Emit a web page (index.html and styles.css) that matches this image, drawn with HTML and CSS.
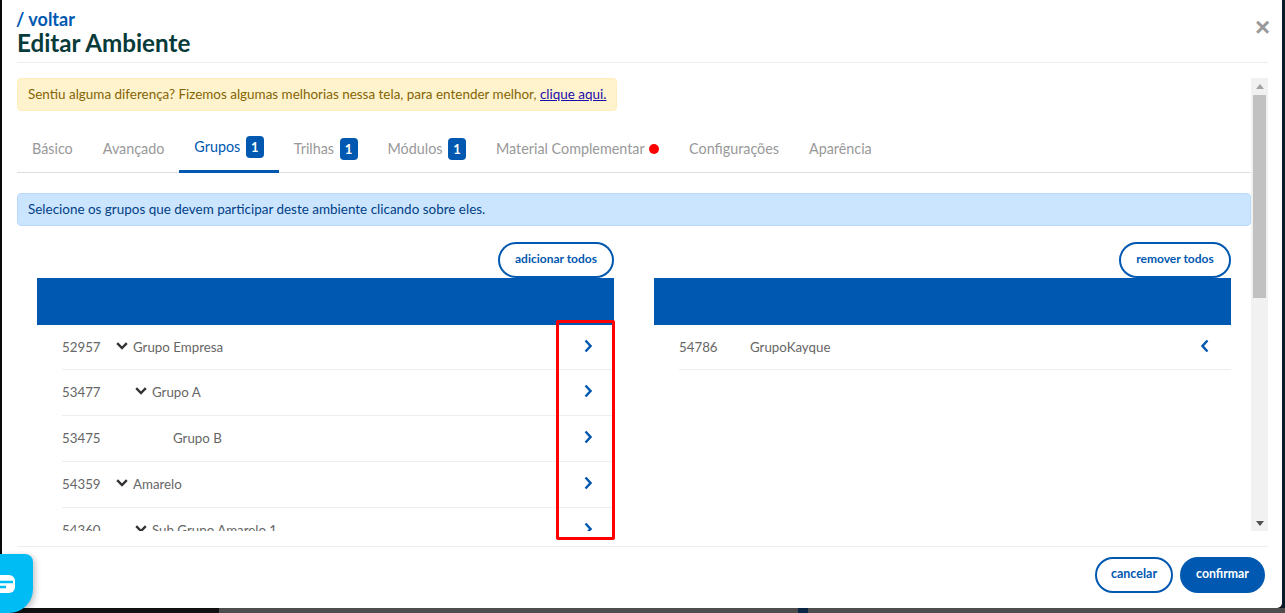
FILE: index.html
```html
<!DOCTYPE html>
<html lang="pt-BR">
<head>
<meta charset="utf-8">
<title>Editar Ambiente</title>
<link rel="stylesheet" href="styles.css">
</head>
<body>
<div class="stage">
  <main class="modal">
    <header class="modal-head">
      <div class="head-text">
        <a class="back">/ voltar</a>
        <h1 class="title">Editar Ambiente</h1>
      </div>
      <span class="close">×</span>
    </header>
    <div class="modal-body">
      <div class="scroll-content">
        <div class="alert alert-warn">Sentiu alguma diferença? Fizemos algumas melhorias nessa tela, para entender melhor, <a class="alert-link">clique aqui.</a></div>
        <nav class="tabs">
          <span class="tab">Básico</span>
          <span class="tab">Avançado</span>
          <span class="tab active">Grupos <b class="badge">1</b></span>
          <span class="tab">Trilhas <b class="badge">1</b></span>
          <span class="tab">Módulos <b class="badge">1</b></span>
          <span class="tab">Material Complementar <i class="dot"></i></span>
          <span class="tab">Configurações</span>
          <span class="tab">Aparência</span>
        </nav>
        <div class="alert alert-info">Selecione os grupos que devem participar deste ambiente clicando sobre eles.</div>
        <div class="columns">
          <section class="col">
            <div class="col-actions"><button class="btn btn-outline btn-small">adicionar todos</button></div>
            <div class="col-head"></div>
            <ul class="list">
              <li class="row"><span class="num">52957</span><span class="name lvl0"><svg class="caret" viewBox="0 0 12 8"><path d="M1.2 1.2 6 6l4.8-4.8"/></svg>Grupo Empresa</span><svg class="arrow" viewBox="0 0 8 14"><path d="M1.5 1.5 6.5 7l-5 5.5"/></svg></li>
              <li class="row"><span class="num">53477</span><span class="name lvl1"><svg class="caret" viewBox="0 0 12 8"><path d="M1.2 1.2 6 6l4.8-4.8"/></svg>Grupo A</span><svg class="arrow" viewBox="0 0 8 14"><path d="M1.5 1.5 6.5 7l-5 5.5"/></svg></li>
              <li class="row"><span class="num">53475</span><span class="name lvl2">Grupo B</span><svg class="arrow" viewBox="0 0 8 14"><path d="M1.5 1.5 6.5 7l-5 5.5"/></svg></li>
              <li class="row"><span class="num">54359</span><span class="name lvl0"><svg class="caret" viewBox="0 0 12 8"><path d="M1.2 1.2 6 6l4.8-4.8"/></svg>Amarelo</span><svg class="arrow" viewBox="0 0 8 14"><path d="M1.5 1.5 6.5 7l-5 5.5"/></svg></li>
              <li class="row"><span class="num">54360</span><span class="name lvl1"><svg class="caret" viewBox="0 0 12 8"><path d="M1.2 1.2 6 6l4.8-4.8"/></svg>Sub Grupo Amarelo 1</span><svg class="arrow" viewBox="0 0 8 14"><path d="M1.5 1.5 6.5 7l-5 5.5"/></svg></li>
            </ul>
          </section>
          <section class="col">
            <div class="col-actions"><button class="btn btn-outline btn-small btn-remove">remover todos</button></div>
            <div class="col-head"></div>
            <ul class="list">
              <li class="row"><span class="num">54786</span><span class="name lvl-plain">GrupoKayque</span><svg class="arrow" viewBox="0 0 8 14"><path d="M6.5 1.5 1.5 7l5 5.5"/></svg></li>
            </ul>
          </section>
        </div>
      </div>
      <div class="scrollbar">
        <span class="sb-up"></span>
        <span class="sb-thumb"></span>
        <span class="sb-down"></span>
      </div>
    </div>
    <footer class="modal-foot">
      <button class="btn btn-outline btn-cancel">cancelar</button>
      <button class="btn btn-solid">confirmar</button>
    </footer>
    <div class="highlight"></div>
  </main>
  <div class="edge"></div>
</div>
<div class="strip">
  <span class="strip-a"></span><span class="strip-b"></span><span class="strip-c"></span><span class="strip-d"></span>
</div>
<div class="chat"><svg class="chat-icon" viewBox="0 0 30 18"><rect width="30" height="18" rx="6" fill="#fff"/><path d="M0 7h28M0 12h21" stroke="#00bcf5" stroke-width="2.4"/></svg></div>
</body>
</html>
```
FILE: styles.css
```css
* { box-sizing: border-box; }
html, body { margin: 0; height: 613px; overflow: hidden; }
body {
  width: 1285px;
  background: #0b1a2b;
  font-family: "Lato", "Noto Sans", sans-serif;
  font-size: 14px;
  color: #666;
  display: flex;
  flex-direction: column;
}
.stage { display: flex; height: 608px; background: #0a0a0a; padding-left: 2px; }
.modal {
  width: 1280px;
  height: 608px;
  background: #fff;
  border-radius: 0 0 5px 5px;
  padding: 0 14px 0 15px;
  display: flex;
  flex-direction: column;
  position: relative;
}
.edge { width: 3px; background: #0b1a2b; }
.strip { display: flex; height: 5px; }
.strip-a { width: 219px; background: #111; }
.strip-b { width: 579px; background: #4d4d4d; }
.strip-c { width: 10px; background: #0b2545; }
.strip-d { flex: 1; background: #4d4d4d; }

.modal-head {
  height: 63px;
  border-bottom: 1px solid #eee;
  display: flex;
  justify-content: space-between;
  flex: none;
}
.head-text { padding-top: 10px; }
.back { display: block; color: #0058b0; font-size: 18px; font-weight: 700; line-height: 19px; margin-left: -1px; }
.title { margin: 0; font-size: 24.2px; font-weight: 700; line-height: 28px; color: #073b3a; }
.close { color: #999; font: 700 26px/26px "Liberation Sans", sans-serif; padding-top: 14px; width: 14px; text-align: center; margin-right: -1px; }

.modal-body { height: 453px; margin-top: 15px; display: flex; flex: none; }
.scroll-content { width: 1234px; height: 453px; overflow: hidden; flex: none; }
.scrollbar { width: 17px; background: #f1f1f1; display: flex; flex-direction: column; align-items: center; flex: none; }
.sb-up { margin-top: 6px; border: 4px solid transparent; border-top: 0; border-bottom: 5px solid #a3a3a3; height: 5px; width: 8px; }
.sb-thumb { width: 13px; height: 203px; background: #c1c1c1; margin-top: 6px; }
.sb-down { margin-top: auto; margin-bottom: 5px; border: 4px solid transparent; border-bottom: 0; border-top: 5px solid #505050; height: 5px; width: 8px; }

.alert { border: 1px solid; border-radius: 4px; height: 33px; line-height: 30px; padding: 0 10px; font-size: 13.46px; white-space: nowrap; }
.alert-warn { width: 600px; background: #fff3cd; border-color: #ffeeba; color: #856404; }
.alert-link { color: #1a0dab; text-decoration: underline; }
.alert-info { background: #cce5ff; border-color: #b8daff; color: #004085; margin-top: 20px; }

.tabs { display: flex; height: 62px; border-bottom: 1px solid #ddd; align-items: flex-end; }
.tab { display: flex; align-items: center; gap: 5.5px; height: 45px; padding: 0 15px 2px; color: #999; font-size: 14.33px; white-space: nowrap; }
.tab.active { color: #0058b0; border-bottom: 3px solid #0058b0; padding-bottom: 3px; height: 47px; margin-bottom: -1px; }
.badge { display: inline-block; width: 18px; height: 22px; line-height: 22px; background: #0058b0; color: #fff; text-align: center; border-radius: 4px; font-size: 13px; }
.dot { width: 10px; height: 10px; background: #f00; border-radius: 50%; margin-left: -1px; }

.columns { display: flex; gap: 40px; padding: 0 20px; margin-top: 16px; }
.col { width: 577px; flex: none; }
.col-actions { display: flex; justify-content: flex-end; height: 36px; }
.btn { font-family: inherit; font-weight: 700; border-radius: 18px; cursor: pointer; padding: 0 0 3px; }
.btn-outline { background: #fff; border: 2px solid #0058b0; color: #0058b0; }
.btn-small { width: 116px; height: 36px; font-size: 12px; }
.btn-remove { width: 112px; }
.col-head { height: 47px; background: #0058b0; }
.list { list-style: none; margin: 0 0 0 25px; padding: 0; }
.row { height: 46px; border-bottom: 1px solid #eee; display: flex; align-items: center; padding-bottom: 2px; font-size: 13.3px; color: #666; position: relative; }
.row:first-child { height: 45px; padding-bottom: 1px; }
.num { width: 54px; flex: none; }
.name { flex: 1; display: flex; align-items: center; gap: 5px; }
.lvl1 { padding-left: 19px; }
.lvl2 { padding-left: 57px; }
.lvl-plain { padding-left: 17px; }
.caret { width: 12px; height: 8px; fill: none; stroke: #333; stroke-width: 2.4; margin-top: -2px; }
.arrow { width: 8px; height: 14px; fill: none; stroke: #0058b0; stroke-width: 2.4; margin-right: 22px; margin-top: -1px; }

.modal-foot { height: 62px; border-top: 1px solid #eee; margin-top: 15px; display: flex; justify-content: flex-end; align-items: flex-start; gap: 7px; padding: 10px 3px 0 0; flex: none; }
.btn-cancel { width: 78px; height: 36px; font-size: 12.5px; }
.btn-solid { width: 85px; height: 36px; font-size: 12.3px; background: #0058b0; color: #fff; border: 0; }

.highlight { position: absolute; left: 554px; top: 320px; width: 59px; height: 220px; border: 3px solid #f00; border-radius: 2px; }
.chat { position: absolute; left: 0; top: 554px; width: 33px; height: 59px; background: #00bcf5; border-radius: 0 8px 24px 0; box-shadow: 2px 2px 6px rgba(0,0,0,.25); overflow: hidden; }
.chat-icon { position: absolute; left: -15px; top: 21px; width: 30px; height: 18px; }
```
